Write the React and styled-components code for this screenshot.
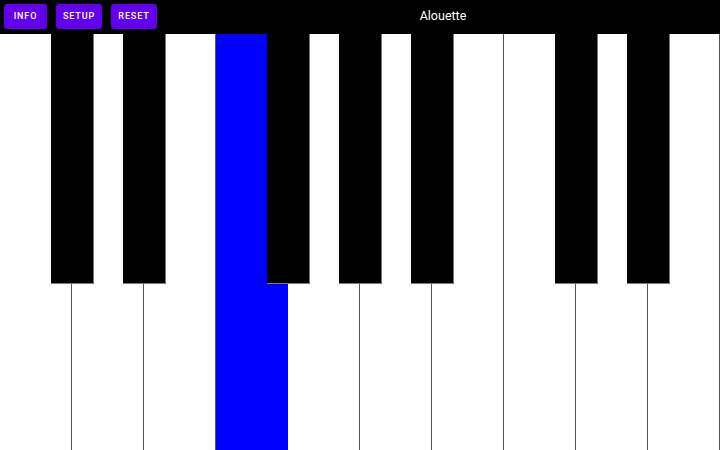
import React from 'react';
import styled, { createGlobalStyle } from 'styled-components';

const GlobalStyle = createGlobalStyle`
  html, body {
    margin: 0;
    padding: 0;
    width: 720px;
    height: 450px;
    overflow: hidden;
    background: #000;
    font-family: Roboto, 'Liberation Sans', sans-serif;
  }
`;

const Screen = styled.div`
  width: 720px;
  height: 450px;
  display: flex;
  flex-direction: column;
`;

const TopBar = styled.div`
  height: 34px;
  background: #000;
  display: flex;
  align-items: center;
  padding: 0 0 0 4px;
  gap: 9px;
`;

const Button = styled.button`
  height: 25px;
  margin-top: -2px;
  width: ${(p) => p.w}px;
  border: none;
  border-radius: 3px;
  background: #6200ee;
  color: #fff;
  font-family: Roboto, sans-serif;
  font-weight: 500;
  font-size: 9px;
  letter-spacing: 0.9px;
  padding: 0;
`;

const Title = styled.div`
  flex: 1;
  text-align: center;
  color: #fff;
  font-size: 12.5px;
  margin-top: -4px;
`;

const Keyboard = styled.div`
  flex: 1;
  display: flex;
  position: relative;
  background: #fff;
`;

const WhiteKey = styled.div`
  width: 72px;
  box-sizing: border-box;
  background: ${(p) => (p.pressed ? '#0000ff' : '#fff')};
  border-right: 1px solid ${(p) => (p.pressed ? '#0000ff' : '#555')};
`;

const BlackKey = styled.div`
  position: absolute;
  top: 0;
  width: 43px;
  height: 250px;
  box-sizing: border-box;
  background: #000;
  border-right: 1px solid #777;
  border-bottom: 1px solid #777;
`;

const whites = [0, 1, 2, 3, 4, 5, 6, 7, 8, 9];
const blacks = [1, 2, 4, 5, 6, 8, 9];

export default function App() {
  return (
    <Screen>
      <GlobalStyle />
      <TopBar>
        <Button w={43}>INFO</Button>
        <Button w={46}>SETUP</Button>
        <Button w={46}>RESET</Button>
        <Title>Alouette</Title>
      </TopBar>
      <Keyboard>
        {whites.map((i) => (
          <WhiteKey key={i} pressed={i === 3} />
        ))}
        {blacks.map((b) => (
          <BlackKey key={b} style={{ left: b * 72 - 21 }} />
        ))}
      </Keyboard>
    </Screen>
  );
}
